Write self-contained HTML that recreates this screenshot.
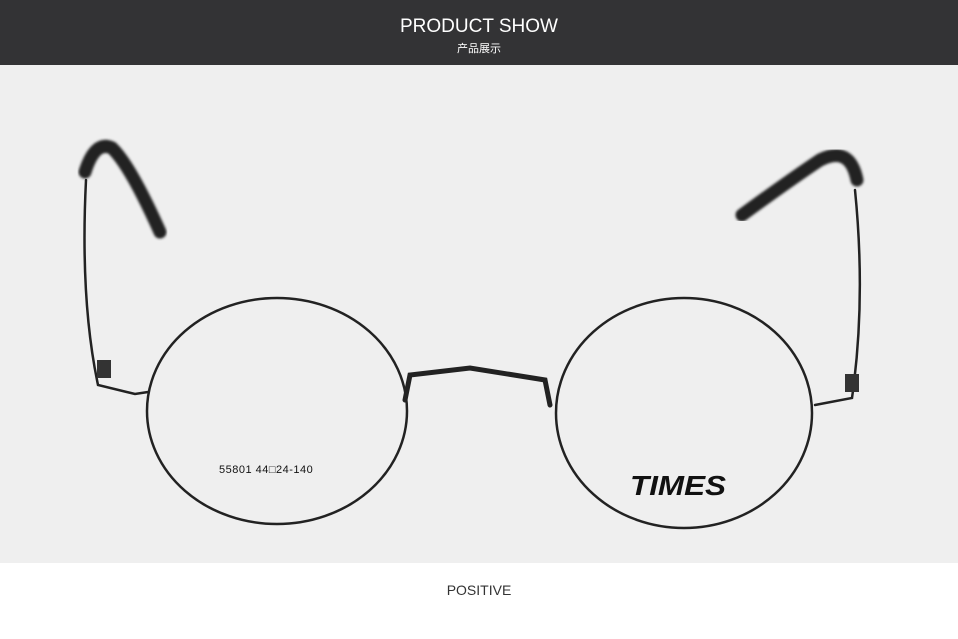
<!DOCTYPE html>
<html><head><meta charset="utf-8"><style>
body{margin:0;width:958px;height:639px;overflow:hidden;background:#fff;font-family:"Liberation Sans","Noto Sans CJK SC",sans-serif;position:relative}
.hd{position:absolute;left:0;top:0;width:958px;height:65px;background:#333335;color:#fff;text-align:center}
.t1{position:absolute;top:16px;width:100%;font-size:19px}
.t2{position:absolute;top:40px;width:100%;font-size:11px}
.ph{position:absolute;left:0;top:65px;width:958px;height:498px;background:#efefef}
.pos{position:absolute;top:582px;width:100%;text-align:center;font-size:14px;color:#333}
</style></head><body>
<div class="hd"><div class="t1">PRODUCT SHOW</div><div class="t2">产品展示</div></div>
<div class="ph"></div>
<svg style="position:absolute;left:0;top:0" width="958" height="639">
<defs><filter id="b"><feGaussianBlur stdDeviation="1.2"/></filter></defs>
<g fill="none" stroke="#222" stroke-linecap="round">
<path d="M86 180 Q80 300 98 385 L135 394 L148 392" stroke-width="2.5"/>
<path d="M85 172 Q95 140 112 148 Q130 165 160 232" stroke-width="13" filter="url(#b)"/>
<path d="M855 190 Q866 300 852 398 L815 405" stroke-width="2.5"/>
<path d="M857 180 Q850 145 820 160 Q790 180 742 215" stroke-width="13" filter="url(#b)"/>
<ellipse cx="277" cy="411" rx="130" ry="113" stroke-width="2.5"/>
<ellipse cx="684" cy="413" rx="128" ry="115" stroke-width="2.5"/>
<path d="M405 400 L410 375 L470 368 L545 380 L550 405" stroke-width="5"/>
</g>
<rect x="97" y="360" width="14" height="18" fill="#333"/>
<rect x="845" y="374" width="14" height="18" fill="#333"/>
<text x="219" y="473" font-size="11" fill="#111" font-family="Liberation Sans" letter-spacing="0.5">55801 44□24-140</text>
<text x="630" y="495" font-size="28" font-weight="bold" font-style="italic" fill="#111" font-family="Liberation Sans" textLength="96" lengthAdjust="spacingAndGlyphs">TIMES</text>
</svg>
<div class="pos">POSITIVE</div>
</body></html>
